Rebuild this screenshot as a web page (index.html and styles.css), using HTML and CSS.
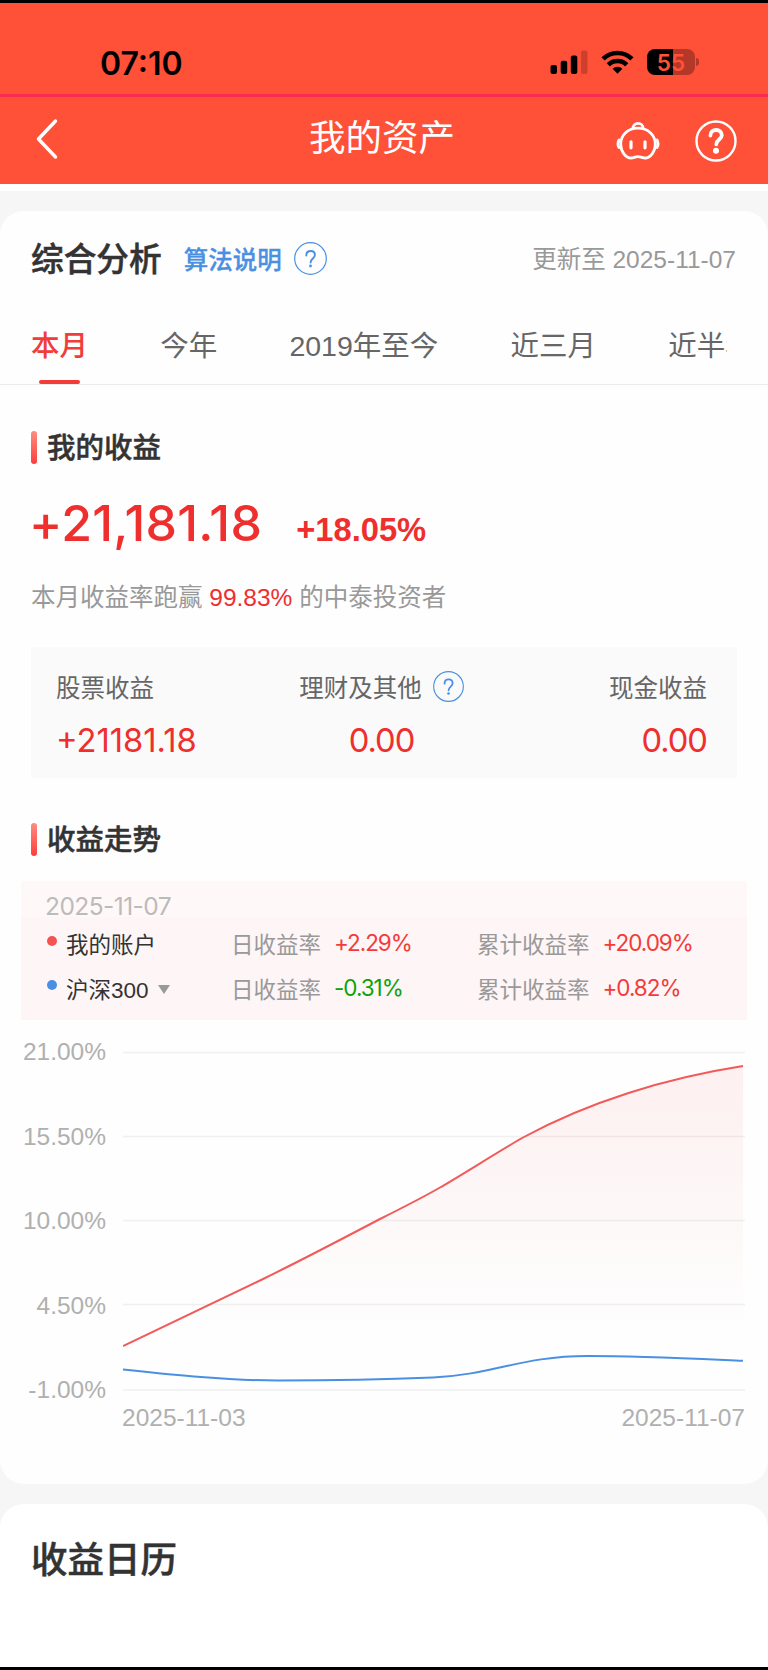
FILE: index.html
```html
<!DOCTYPE html>
<html lang="zh-CN">
<head>
<meta charset="utf-8">
<title>我的资产</title>
<link rel="stylesheet" href="styles.css">
</head>
<body>
<div class="screen">
  <div class="status">
    <span class="clock">07:10</span>
    <div class="status-icons">
      <svg width="38" height="26" viewBox="0 0 38 26">
        <rect x="0.5" y="15" width="6.5" height="9" rx="2"/>
        <rect x="10.7" y="10.7" width="6.5" height="13.3" rx="2"/>
        <rect x="20.8" y="5.5" width="6.5" height="18.5" rx="2"/>
        <rect x="31" y="0.5" width="6.5" height="23.5" rx="2" opacity=".2"/>
      </svg>
      <svg class="wifi" width="33" height="26" viewBox="0 0 33 26">
        <g fill="none" stroke="#000" stroke-width="4.6">
          <path d="M2 8.9A20.6 20.6 0 0 1 31 8.9"/>
          <path d="M7.3 14.8A13 13 0 0 1 25.7 14.8"/>
        </g>
        <path d="M11.6 18.7a7 7 0 0 1 9.800 0l-4.900 5z"/>
      </svg>
      <div class="battery"><span class="level"><b>5</b><b>5</b></span><i></i></div>
    </div>
  </div>
  <header class="nav">
    <svg class="back" width="24" height="42" viewBox="0 0 24 42"><path d="M20.500 3 3.500 21l17 18" fill="none" stroke="#fff" stroke-width="3.400" stroke-linecap="round" stroke-linejoin="round"/></svg>
    <h1>我的资产</h1>
    <div class="nav-icons">
      <svg width="44" height="40" viewBox="0 0 44 40" fill="none" stroke="#fff" stroke-width="2.800" stroke-linecap="round" stroke-linejoin="round">
        <path d="M17 7.200a5 4.800 0 0 1 10 0"/>
        <path d="M22 7.200C32 7.200 39.300 14 39.300 23c0 7.500-5 14-10.300 14-3 0-3.500-1.400-7-1.400s-4 1.400-7 1.400C9.700 37 4.700 30.500 4.700 23 4.700 14 12 7.200 22 7.200z"/>
        <path d="M3 19c-1.200 2-1.200 5.500 0 7.500M41 19c1.200 2 1.200 5.500 0 7.500"/>
        <path d="M15 20.800v6M29 20.800v6" stroke-width="3.200"/>
      </svg>
      <svg width="42" height="42" viewBox="0 0 42 42" fill="none" stroke="#fff">
        <circle cx="21" cy="21" r="19.500" stroke-width="2.400"/>
        <path d="M15.400 15.500c0-3.400 2.500-5.500 5.700-5.500s5.700 2.100 5.700 5.300c0 4.200-5.500 4.400-5.500 9" stroke-width="3.800" stroke-linecap="round"/>
        <circle cx="21" cy="30.800" r="3" fill="#fff" stroke="none"/>
      </svg>
    </div>
  </header>

  <main>
    <section class="card analysis">
      <div class="head">
        <h2>综合分析</h2>
        <span class="algo">算法说明</span>
        <svg class="help" width="33" height="33" viewBox="0 0 33 33"><circle cx="16.500" cy="16.500" r="15.800"/><path d="M12.300 13.500c0-2.800 1.800-4.500 4.300-4.500s4.300 1.700 4.300 4.100c0 3.300-4.300 3.700-4.300 7.400"/><circle class="dot" cx="16.500" cy="24" r="1.400"/></svg>
        <span class="updated">更新至 2025-11-07</span>
      </div>
      <div class="tabs">
        <div class="tab-list">
          <span class="tab active">本月</span>
          <span class="tab">今年</span>
          <span class="tab">2019年至今</span>
          <span class="tab">近三月</span>
          <span class="tab">近半年</span>
        </div>
      </div>

      <h3 class="first">我的收益</h3>
      <div class="total"><span class="amount">+21,181.18</span><span class="rate">+18.05%</span></div>
      <p class="beat">本月收益率跑赢 <em>99.83%</em> 的中泰投资者</p>

      <div class="split">
        <div><div class="label">股票收益</div><div class="value">+21181.18</div></div>
        <div class="mid"><div class="label">理财及其他<svg class="help" width="31" height="31" viewBox="0 0 33 33"><circle cx="16.500" cy="16.500" r="15.800"/><path d="M12.300 13.500c0-2.800 1.800-4.500 4.300-4.500s4.300 1.700 4.300 4.100c0 3.300-4.300 3.700-4.300 7.400"/><circle class="dot" cx="16.500" cy="24" r="1.400"/></svg></div><div class="value zero">0.00</div></div>
        <div class="end"><div class="label">现金收益</div><div class="value zero">0.00</div></div>
      </div>

      <h3 class="second">收益走势</h3>
      <div class="legend">
        <div class="legend-date">2025-11-07</div>
        <div class="legend-row"><i class="mark red"></i><span class="name">我的账户</span><span class="key day">日收益率</span><span class="num up">+2.29%</span><span class="key">累计收益率</span><span class="num up">+20.09%</span></div>
        <div class="legend-row"><i class="mark blue"></i><span class="name">沪深300<i class="caret"></i></span><span class="key day">日收益率</span><span class="num down">-0.31%</span><span class="key">累计收益率</span><span class="num up">+0.82%</span></div>
      </div>

      <div class="chart">
        <div class="y-axis"><span>21.00%</span><span>15.50%</span><span>10.00%</span><span>4.50%</span><span>-1.00%</span></div>
        <div class="plot">
          <svg width="623" height="362" viewBox="0 0 623 362">
            <defs><linearGradient id="area" gradientUnits="userSpaceOnUse" x1="0" y1="26" x2="0" y2="290"><stop offset="0" stop-color="#f24a4a" stop-opacity=".08"/><stop offset="1" stop-color="#f24a4a" stop-opacity="0"/></linearGradient></defs>
            <path d="M0 12.500h622M0 96.500h622M0 180.500h622M0 264.500h622M0 350h622" stroke="#f0f0f0" stroke-width="1.300"/>
            <path d="M0 306C47 283.500 94 261 138 240C178 220.500 218 199.500 257 179C278 168.500 298 158.500 317 147.500C333 138.500 378 110 400 97.500C465 62 543 38 620 26V350H0z" fill="url(#area)"/>
            <path d="M0 306C47 283.500 94 261 138 240C178 220.500 218 199.500 257 179C278 168.500 298 158.500 317 147.500C333 138.500 378 110 400 97.500C465 62 543 38 620 26" fill="none" stroke="#f25a5a" stroke-width="2"/>
            <path d="M0 329.500C52 335 104 340.500 155 340.500C208 340.500 262 339.500 310 337.500C372 334.500 398 316 465 316C517 316 568 318.500 620 320.700" fill="none" stroke="#4a90e2" stroke-width="2"/>
          </svg>
        </div>
      </div>
      <div class="x-axis"><span>2025-11-03</span><span>2025-11-07</span></div>
    </section>

    <section class="card calendar"><h2>收益日历</h2></section>
  </main>
</div>
</body>
</html>
```
FILE: styles.css
```css
* { box-sizing: border-box; margin: 0; padding: 0; }
body {
  width: 768px;
  font-family: "Liberation Sans", "Noto Sans CJK SC", sans-serif;
  font-size: 24.5px;
  color: #333;
  background: #f6f6f6;
}
h1, h2, h3 { font-weight: 500; }
h2, h3 { -webkit-text-stroke: 0.5px #333; }
svg { display: block; flex: none; }
em, i { font-style: normal; }

.screen {
  height: 1670px;
  display: flex;
  flex-direction: column;
  border-top: 3px solid #000;
  border-bottom: 3px solid #000;
  overflow: hidden;
}

.status {
  height: 94px;
  flex: none;
  display: flex;
  justify-content: space-between;
  padding: 40px 69px 0 100px;
  background: #ff5038;
  border-bottom: 3px solid #ff2850;
}
.clock { font: 600 32px/41px Inter, sans-serif; color: #000; }
.status-icons { display: flex; padding-top: 6px; }
.status-icons svg { margin-top: 1px; }
.wifi { margin: 1px 13px 0; }
.battery { display: flex; align-items: center; height: 26px; }
.level {
  width: 48px;
  height: 26px;
  display: flex;
  justify-content: center;
  border-radius: 8px;
  background: linear-gradient(90deg, #000 26px, #b33827 26px);
  color: #ff5038;
  font: 600 22.500px/27px Inter, sans-serif;
}
.level b { font-weight: 600; }
.battery i { width: 3px; height: 8px; margin-left: 1px; border-radius: 0 4px 4px 0; background: #b33827; }

.nav {
  height: 87px;
  flex: none;
  display: grid;
  grid-template-columns: 1fr auto 1fr;
  align-items: center;
  padding: 0 31px 3px 35px;
  background: #ff5038;
}
.nav h1 { margin: 0 4px 0 -4px; font-size: 36.500px; font-weight: 400; line-height: 40px; color: #fff; }
.nav-icons { display: flex; justify-content: flex-end; align-items: center; gap: 35px; padding-top: 3px; }

main { border-top: 7px solid #fff; padding-top: 20px; display: flex; flex-direction: column; gap: 20px; }
.card { background: #fefefe; border-radius: 24px; }

.analysis { height: 1273px; }
.head { height: 95px; display: flex; align-items: center; padding: 0 32px 0 31px; }
.head h2 { font-size: 32.7px; padding-bottom: 4px; }
.algo { margin-left: 22px; font-weight: 500; color: #4a90e2; -webkit-text-stroke: 0.3px #4a90e2; }
.help { fill: none; stroke: #4a90e2; stroke-width: 1.2; }
.help path { stroke-width: 1.9; stroke-linecap: round; }
.help .dot { fill: #4a90e2; stroke: none; }
.head .help { margin: -1px 0 0 12px; }
.updated { margin-left: auto; padding-bottom: 3px; color: #999; }

.tabs { height: 79px; padding: 0 41px 0 31px; border-bottom: 1.500px solid #ebebeb; }
.tab-list { height: 78px; display: flex; gap: 72.200px; overflow: hidden; white-space: nowrap; }
.tab { flex: none; position: relative; font-size: 28.500px; line-height: 80px; color: #666; }
.tab.active { color: #f23c3a; font-weight: 500; }
.tab.active::after { content: ""; position: absolute; left: 8px; bottom: 0; width: 41px; height: 4px; border-radius: 2px; background: #f23c3a; }

h3 { display: flex; align-items: center; height: 33px; margin-left: 31px; font-size: 28.500px; line-height: 36px; }
h3::before { content: ""; width: 6px; height: 33px; margin-right: 10px; border-radius: 3px; background: linear-gradient(#ff8c80, #fb3e3c); }
h3.first { margin-top: 46px; }
h3.second { margin-top: 45px; }

.total { display: flex; align-items: baseline; height: 60px; margin: 29px 0 0 29px; line-height: 61px; color: #ee2f2e; }
.amount { font-family: Inter, sans-serif; font-size: 50px; font-weight: 500; letter-spacing: 0.300px; }
.rate { margin-left: 34px; font-size: 32.700px; font-weight: 700; }
.beat { margin: 30px 0 0 31px; line-height: 30px; color: #999; }
.beat em { color: #ee2f2e; }

.split { display: grid; grid-template-columns: repeat(3, 1fr); height: 131px; margin: 34px 31px 0; padding: 24px 30px 0 25px; background: #fafafa; }
.label { display: flex; align-items: center; height: 30px; color: #666; }
.label .help { margin: 0 0 0 11px; }
.mid .label { justify-content: center; }
.mid .value { text-align: center; }
.end .label { justify-content: flex-end; }
.end .value { text-align: right; }
.value { margin-top: 21px; font: 400 32.700px/36px Inter, sans-serif; color: #ee2f2e; }
.zero { letter-spacing: -1px; }

.legend { height: 139px; margin: 25px 21px 0; background: #fef5f6; }
.legend-date { height: 36px; padding-left: 24px; line-height: 50px; font-family: Inter, sans-serif; color: #bbb; background: #fff8f8; margin-bottom: 3px; letter-spacing: -0.550px; }
.legend-row { display: flex; align-items: center; height: 45px; padding-left: 26px; font-size: 22.500px; }
.mark { width: 10px; height: 10px; margin-top: -3px; border-radius: 50%; }
.red { background: #f55353; }
.blue { margin-top: -5px; background: #4a90e2; }
.name { display: flex; align-items: center; width: 165px; margin-left: 9px; }
.caret { margin: 4px 0 0 9px; border: 6.500px solid transparent; border-top: 9px solid #999; border-bottom: 0; }
.key { color: #999; }
.num { width: 156px; padding-left: 13px; font-family: Inter, sans-serif; letter-spacing: -1.050px; }
.up { color: #f23c3a; }
.down { color: #0aa50a; }

.chart { display: flex; margin-top: 20px; height: 362px; }
.y-axis { width: 106px; margin-right: 17px; display: flex; flex-direction: column; justify-content: space-between; text-align: right; line-height: 24px; color: #b0b0b0; }
.x-axis { display: flex; justify-content: space-between; padding: 2px 23px 0 122px; line-height: 28px; color: #b0b0b0; }

.calendar { height: 200px; padding: 36px 31px; background: #fff; }
.calendar h2 { font-size: 36.500px; line-height: 42px; }
```
